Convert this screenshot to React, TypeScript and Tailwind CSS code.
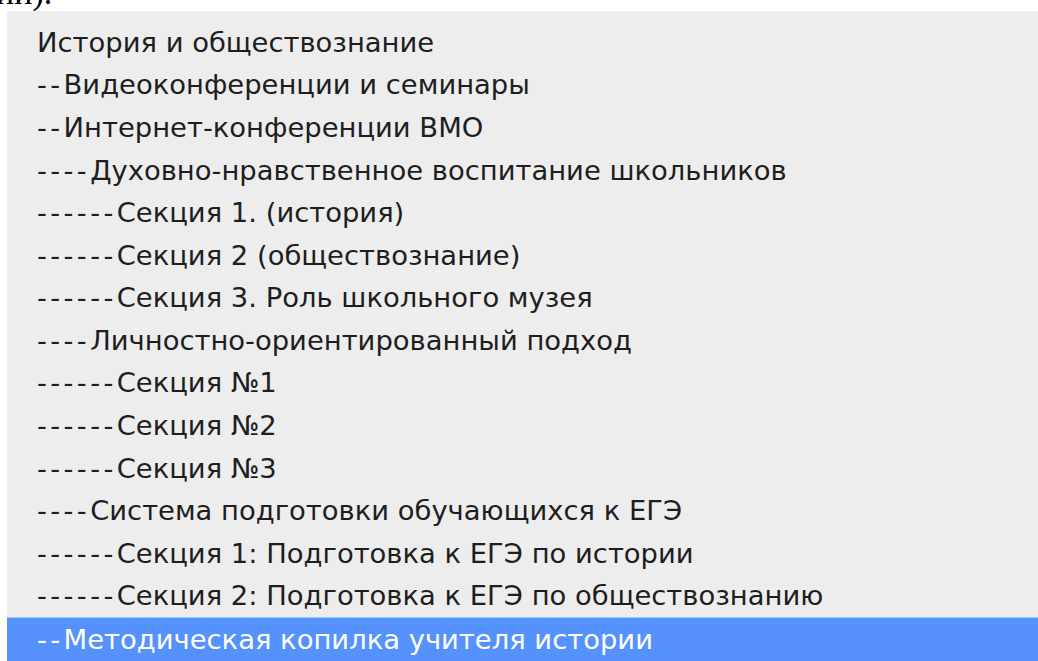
const items = [
  { depth: 0, label: 'История и обществознание' },
  { depth: 1, label: 'Видеоконференции и семинары' },
  { depth: 1, label: 'Интернет-конференции ВМО' },
  { depth: 2, label: 'Духовно-нравственное воспитание школьников' },
  { depth: 3, label: 'Секция 1. (история)' },
  { depth: 3, label: 'Секция 2 (обществознание)' },
  { depth: 3, label: 'Секция 3. Роль школьного музея' },
  { depth: 2, label: 'Личностно-ориентированный подход' },
  { depth: 3, label: 'Секция №1' },
  { depth: 3, label: 'Секция №2' },
  { depth: 3, label: 'Секция №3' },
  { depth: 2, label: 'Система подготовки обучающихся к ЕГЭ' },
  { depth: 3, label: 'Секция 1: Подготовка к ЕГЭ по истории' },
  { depth: 3, label: 'Секция 2: Подготовка к ЕГЭ по обществознанию' },
  { depth: 1, label: 'Методическая копилка учителя истории' },
]

export default function App() {
  const selected = items.length - 1

  return (
    <div className="w-[1038px] h-[661px] overflow-hidden bg-white">
      {/* tail of the paragraph above the list */}
      <div className="h-[11px] overflow-hidden">
        <p className="-mt-[27px] -ml-[4px] text-[34px] leading-[40px] text-black font-['Liberation_Serif',serif]">
          ии).
        </p>
      </div>

      <div className="ml-[7px] h-[650px] bg-[#ededed] pt-[10px] font-['DejaVu_Sans',sans-serif] text-[27.4px]">
        {items.map((item, i) => (
          <div
            key={i}
            className={
              i === selected
                ? 'h-[44px] flex items-center pl-[30px] bg-[#5592fd] text-white border-t border-[#a6c6ff]'
                : 'h-[42.6px] flex items-center pl-[30px] text-[#1e1e1e]'
            }
          >
            <span className="whitespace-pre">
              <span className="tracking-[3.4px]">{'--'.repeat(item.depth)}</span>
              {item.label}
            </span>
          </div>
        ))}
      </div>
    </div>
  )
}
